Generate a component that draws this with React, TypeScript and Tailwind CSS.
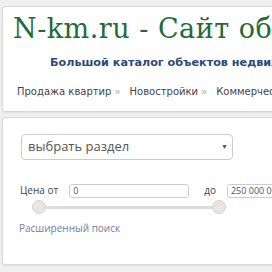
function Header() {
    return (
        <div className="mt-[6px] ml-[2px] w-[290px] h-[106px] bg-white border border-[#d8d8d8] rounded-[3px] shadow-[0_1px_2px_rgba(0,0,0,0.08)] overflow-hidden">
            <div className="pl-[10px] pt-[5px] whitespace-nowrap text-[27px] leading-[34px] text-[#1f6b3a] font-['DejaVu_Serif',serif] tracking-[0.5px]">
                N-km.ru - Сайт об объявлениях
            </div>
            <div className="pl-[47px] mt-[10px] whitespace-nowrap text-[11.2px] leading-[14px] font-bold text-[#2c4a78] font-['DejaVu_Sans',sans-serif]">
                Большой каталог объектов недвижимости
            </div>
            <nav className="flex gap-[9px] pl-[14px] mt-[15px] whitespace-nowrap text-[10px] leading-[14px] text-[#444] font-['DejaVu_Sans',sans-serif]">
                <span>Продажа квартир<span className="text-[#aaa] ml-[3px]">»</span></span>
                <span>Новостройки<span className="text-[#aaa] ml-[3px]">»</span></span>
                <span>Коммерческая</span>
            </nav>
        </div>
    )
}

function SearchCard() {
    return (
        <div className="mt-[5px] ml-[2px] w-[290px] h-[148px] bg-white border border-[#d8d8d8] rounded-[3px] shadow-[0_1px_2px_rgba(0,0,0,0.08)] overflow-hidden font-['Open_Sans',sans-serif]">
            <div className="ml-[18px] mt-[16px] w-[212px] h-[26px] border border-[#ccc] rounded-[4px] flex items-center justify-between pl-[6px] pr-[4px]">
                <span className="text-[13px] text-[#555]">выбрать раздел</span>
                <span className="text-[7px] text-[#555]">▼</span>
            </div>
            <div className="flex items-center mt-[23px] ml-[17px] text-[10px] text-[#444] whitespace-nowrap">
                <span className="shrink-0">Цена от</span>
                <div className="shrink-0 ml-[11px] w-[120px] h-[14px] border border-[#ccc] rounded-[3px] px-[3px] flex items-center text-[9px] text-[#555]">0</div>
                <span className="shrink-0 ml-[15px]">до</span>
                <div className="shrink-0 ml-[11px] w-[90px] h-[14px] border border-[#ccc] rounded-[3px] px-[3px] flex items-center text-[9px] text-[#555]">250 000 000</div>
            </div>
            <div className="relative ml-[29px] mt-[1px] w-[194px] h-[16px] flex items-center">
                <div className="mx-[3px] flex-1 h-[3px] bg-[#ddd] rounded-full" />
                <div className="absolute left-0 top-[1px] w-[14px] h-[14px] rounded-full bg-[#e6e6e6] border border-[#d4d4d4]" />
                <div className="absolute right-0 top-[1px] w-[14px] h-[14px] rounded-full bg-[#e6e6e6] border border-[#d4d4d4]" />
            </div>
            <div className="ml-[16px] mt-[6px] text-[10px] text-[#6f7e9e]">Расширенный поиск</div>
        </div>
    )
}

export default function App() {
    return (
        <div className="w-[272px] h-[272px] overflow-hidden bg-[#f0f0f0]">
            <Header />
            <SearchCard />
        </div>
    )
}
